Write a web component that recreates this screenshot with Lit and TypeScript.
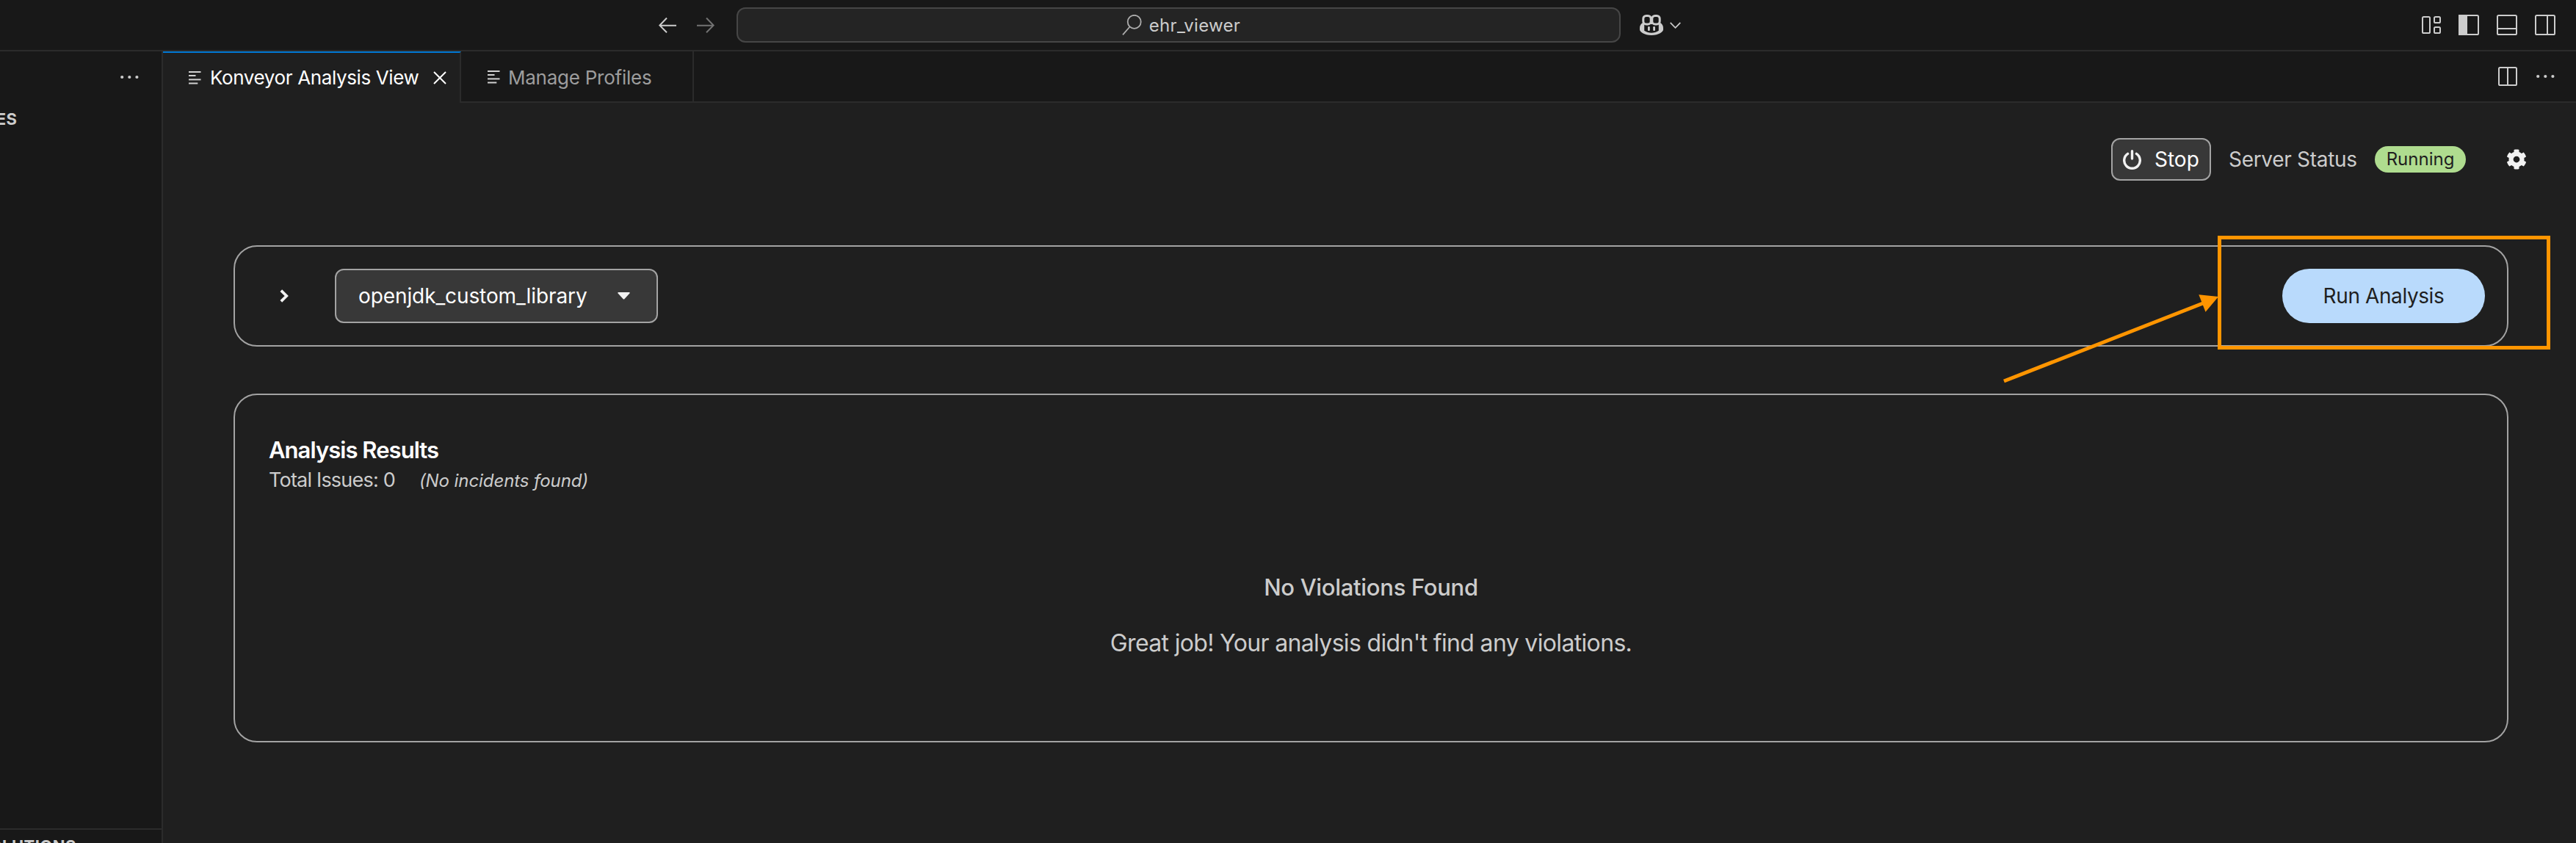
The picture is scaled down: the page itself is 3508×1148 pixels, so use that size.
import { LitElement, html, css, svg } from "lit";
import { customElement } from "lit/decorators.js";

const tabIcon = html`<svg width="17" height="18" viewBox="0 0 17 18" fill="#d0d0d0">
  <rect x="0" y="0" width="16.5" height="2"></rect>
  <rect x="0" y="5" width="9.5" height="2"></rect>
  <rect x="0" y="10.4" width="16.5" height="2"></rect>
  <rect x="0" y="15.5" width="12.3" height="2"></rect>
</svg>`;

const dots = html`<svg width="25" height="6" viewBox="0 0 25 6" fill="#cccccc">
  <circle cx="2.2" cy="3" r="2.1"></circle><circle cx="12.3" cy="3" r="2.1"></circle><circle cx="22.4" cy="3" r="2.1"></circle>
</svg>`;

const frame = (size: number, inner: unknown) => html`<svg width=${size} height=${size} viewBox="0 0 ${size} ${size}" fill="none" stroke="#cccccc" stroke-width="2">
  <rect x="1" y="1" width=${size - 2} height=${size - 2} rx="1.6"></rect>${inner}
</svg>`;

@customElement("title-bar")
class TitleBar extends LitElement {
  static styles = css`
    :host { display: flex; align-items: center; height: 68px; border-bottom: 2px solid #2b2b2b; padding: 0 28px 0 897px; box-sizing: content-box; }
    svg { display: block; flex: none; }
    .nav { display: flex; gap: 28px; margin-right: 30px; }
    .search { box-sizing: border-box; width: 1204px; height: 48px; border: 2px solid #464646; border-radius: 12px; background: #242424;
      display: flex; align-items: center; justify-content: center; gap: 10px; padding-left: 7px; color: #cccccc; letter-spacing: 0.3px; }
    .copilot { display: flex; align-items: center; gap: 9px; margin-left: 26px; }
    .layout { display: flex; align-items: center; gap: 24px; margin-left: auto; }
  `;
  render() {
    return html`
      <div class="nav">
        <svg width="24" height="22" viewBox="0 0 24 22" fill="none" stroke="#cccccc" stroke-width="2"><path d="M24 11.8H1.5M11 1.5L1.3 11.5L11 21.2"></path></svg>
        <svg width="24" height="22" viewBox="0 0 24 22" fill="none" stroke="#737373" stroke-width="2"><path d="M0 11.8H22.5M13 1.5L22.7 11.5L13 21.2"></path></svg>
      </div>
      <div class="search">
        <svg width="27" height="28" viewBox="0 0 27 28" fill="none" stroke="#adadad" stroke-width="1.8"><circle cx="16.7" cy="9.8" r="9"></circle><path d="M10.5 16.5L1 27.3"></path></svg>
        <span>ehr_viewer</span>
      </div>
      <div class="copilot">
        <svg width="32" height="28" viewBox="0 0 32 28" fill="#cccccc">
          <path fill-rule="evenodd" d="M4 11C1.5 12.5 0 15 0 18V20.5C0 23 6 28 16 28S32 23 32 20.5V18C32 15 30.5 12.5 28 11ZM6.2 13H25.8V21.8C20 25.6 12 25.6 6.2 21.8Z"></path>
          <rect x="4.8" y="1.5" width="10.4" height="11.4" rx="4" fill="#181818" stroke="#cccccc" stroke-width="3"></rect>
          <rect x="16.8" y="1.5" width="10.4" height="11.4" rx="4" fill="#181818" stroke="#cccccc" stroke-width="3"></rect>
          <rect x="11" y="16" width="2.8" height="6" rx="1.3"></rect><rect x="18.2" y="16" width="2.8" height="6" rx="1.3"></rect>
        </svg>
        <svg width="15" height="9" viewBox="0 0 15 9" fill="none" stroke="#cccccc" stroke-width="1.7"><path d="M0.7 0.9L7.5 7.8L14.3 0.9"></path></svg>
      </div>
      <div class="layout">
        <svg width="26" height="24" viewBox="0 0 26 24" fill="none" stroke="#cccccc" stroke-width="2"><rect x="1" y="1" width="10" height="22" rx="1.6"></rect><rect x="17" y="1" width="8" height="8" rx="1.6"></rect><rect x="17" y="15" width="8" height="8" rx="1.6"></rect></svg>
        ${frame(28, svg`<rect x="1" y="1" width="10" height="26" fill="#cccccc"></rect>`)}
        ${frame(28, svg`<path d="M1 19H27"></path>`)}
        ${frame(28, svg`<path d="M17 1V27"></path>`)}
      </div>`;
  }
}

@customElement("side-panel")
class SidePanel extends LitElement {
  static styles = css`
    :host { display: flex; flex-direction: column; box-sizing: border-box; width: 222px; border-right: 2px solid #2b2b2b; overflow: hidden; color: #cccccc; font-weight: 700; font-size: 22px; }
    .head { display: flex; justify-content: flex-end; align-items: center; height: 70px; padding-right: 31px; flex: none; }
    .label { display: flex; justify-content: flex-end; line-height: 44px; white-space: nowrap; letter-spacing: 0.5px; }
    .first { width: 23.5px; }
    .grow { flex: 1; }
    .section { height: 18px; border-top: 2px solid #2b2b2b; overflow: hidden; }
    .second { width: 104px; }
  `;
  render() {
    return html`
      <div class="head">${dots}</div>
      <div class="label first">ES</div>
      <div class="grow"></div>
      <div class="section"><div class="label second">OLUTIONS</div></div>`;
  }
}

@customElement("editor-tabs")
class EditorTabs extends LitElement {
  static styles = css`
    :host { display: flex; height: 70px; font-size: 26px; background: #181818; }
    svg { display: block; flex: none; }
    .tab { box-sizing: border-box; display: flex; align-items: center; border-right: 2px solid #2b2b2b; white-space: nowrap; }
    .active { width: 406px; background: #1f1f1f; border-top: 2px solid #0078d4; padding-left: 35px; padding-bottom: 1px; color: #ffffff; letter-spacing: -0.38px; }
    .active .name { margin: 0 21px 0 12px; width: 283px; }
    .idle { width: 317px; border-bottom: 2px solid #2b2b2b; padding: 2px 0 0 36px; color: #9d9d9d; letter-spacing: -0.25px; }
    .idle .name { margin-left: 11px; }
    .rest { flex: 1; display: flex; align-items: center; justify-content: flex-end; gap: 26px; border-bottom: 2px solid #2b2b2b; padding-right: 29px; }
  `;
  render() {
    return html`
      <div class="tab active">${tabIcon}<span class="name">Konveyor Analysis View</span>
        <svg width="18" height="18" viewBox="0 0 18 18" fill="none" stroke="#ffffff" stroke-width="2"><path d="M1 1L17 17M17 1L1 17"></path></svg>
      </div>
      <div class="tab idle">${tabIcon}<span class="name">Manage Profiles</span></div>
      <div class="rest">${frame(26, svg`<path d="M13 1V25"></path>`)}${dots}</div>`;
  }
}

@customElement("analysis-view")
class AnalysisView extends LitElement {
  static styles = css`
    :host { display: flex; flex-direction: column; padding: 48px 92px 0 96px; color: #cccccc; font-size: 28px; }
    svg { display: block; flex: none; }
    .status { display: flex; justify-content: flex-end; align-items: center; height: 58px; margin-right: -25px; margin-bottom: 88px; white-space: nowrap; }
    .stop { box-sizing: border-box; display: flex; align-items: center; gap: 18px; width: 136px; height: 58px; padding-left: 14px; border: 2px solid #a3a3a3; border-radius: 12px; background: #383838; color: #ffffff; }
    .server { width: 175px; margin: 0 24px 0 24px; letter-spacing: -0.3px; }
    .badge { width: 124px; height: 36px; border-radius: 18px; background: #afdc8f; color: #1f1f1f; font-size: 24px; line-height: 36px; text-align: center; margin-right: 55px; }
    .card { box-sizing: border-box; border: 2px solid #a3a3a3; border-radius: 32px; }
    .controls { display: flex; align-items: center; height: 138px; margin-bottom: 64px; padding: 0 30px 0 61px; }
    .select { box-sizing: border-box; display: flex; align-items: center; justify-content: space-between; width: 440px; height: 74px; margin-left: 63px; padding: 0 36px 0 30px; border: 2px solid #a3a3a3; border-radius: 12px; background: #383838; color: #ffffff; letter-spacing: -0.1px; }
    .run { width: 276px; height: 74px; border-radius: 37px; margin-left: auto; background: #b9dafc; color: #1f1f1f; line-height: 74px; text-align: center; letter-spacing: -0.4px; }
    .results { height: 475px; padding: 55px 46px 0; }
    .title { font-size: 31px; line-height: 40px; font-weight: 600; color: #ffffff; letter-spacing: -0.95px; }
    .totals { display: flex; align-items: baseline; line-height: 42px; gap: 33px; }
    .count { font-size: 27px; letter-spacing: -0.8px; }
    .note { font-size: 24px; font-style: italic; letter-spacing: -0.08px; }
    .empty { display: flex; flex-direction: column; align-items: center; gap: 28px; margin-top: 100px; line-height: 48px; }
    .none { font-size: 31px; font-weight: 500; letter-spacing: -0.3px; }
    .praise { font-size: 32px; letter-spacing: -0.66px; }
  `;
  render() {
    return html`
      <div class="status">
        <div class="stop">
          <svg width="25" height="27" viewBox="0 0 25 27" fill="none" stroke="#f2f2f2" stroke-width="3.4" stroke-linecap="round"><path d="M12.5 1.8V12M6.6 5.4A10.8 10.8 0 1 0 18.4 5.4"></path></svg>
          <span>Stop</span>
        </div>
        <span class="server">Server Status</span>
        <span class="badge">Running</span>
        <svg width="28" height="28" viewBox="0 0 512 512" fill="#f2f2f2"><path d="M487.4 315.7l-42.6-24.6c4.3-23.2 4.3-47 0-70.2l42.6-24.6c4.9-2.8 7.1-8.6 5.5-14-11.1-35.6-30-67.8-54.7-94.6-3.8-4.1-10-5.1-14.8-2.3L380.8 110c-17.9-15.4-38.5-27.3-60.8-35.1V25.8c0-5.6-3.9-10.5-9.4-11.7-36.7-8.2-74.3-7.8-109.2 0-5.5 1.2-9.4 6.1-9.4 11.7V75c-22.2 7.9-42.8 19.8-60.8 35.1L88.7 85.5c-4.9-2.8-11-1.9-14.8 2.3-24.7 26.7-43.6 58.9-54.7 94.6-1.7 5.4.6 11.2 5.5 14L67.3 221c-4.3 23.2-4.3 47 0 70.2l-42.6 24.6c-4.9 2.8-7.1 8.6-5.5 14 11.1 35.6 30 67.8 54.7 94.6 3.8 4.1 10 5.1 14.8 2.3l42.6-24.6c17.9 15.4 38.5 27.3 60.8 35.1v49.2c0 5.6 3.9 10.5 9.4 11.7 36.7 8.2 74.3 7.8 109.2 0 5.5-1.2 9.4-6.1 9.4-11.7v-49.2c22.2-7.9 42.8-19.8 60.8-35.1l42.6 24.6c4.9 2.8 11 1.9 14.8-2.3 24.7-26.7 43.6-58.9 54.7-94.6 1.5-5.5-.7-11.3-5.6-14.1zM256 336c-44.1 0-80-35.9-80-80s35.9-80 80-80 80 35.9 80 80-35.9 80-80 80z"></path></svg>
      </div>
      <div class="card controls">
        <svg width="12" height="18" viewBox="0 0 12 18" fill="none" stroke="#f2f2f2" stroke-width="3.8"><path d="M1.8 1.6L9.2 9L1.8 16.4"></path></svg>
        <div class="select"><span>openjdk_custom_library</span>
          <svg width="17" height="10" viewBox="0 0 17 10" fill="#f2f2f2"><path d="M1.2 0H15.8C16.8 0 17 0.9 16.4 1.6L9.3 9.2Q8.5 9.9 7.7 9.2L0.6 1.6C0 0.9 0.2 0 1.2 0Z"></path></svg>
        </div>
        <div class="run">Run Analysis</div>
      </div>
      <div class="card results">
        <div class="title">Analysis Results</div>
        <div class="totals"><span class="count">Total Issues: 0</span><span class="note">(No incidents found)</span></div>
        <div class="empty"><div class="none">No Violations Found</div><div class="praise">Great job! Your analysis didn't find any violations.</div></div>
      </div>`;
  }
}

@customElement("app-root")
class AppRoot extends LitElement {
  static styles = css`
    :host { display: flex; flex-direction: column; position: relative; width: 3508px; height: 1148px; overflow: hidden; background: #181818; font: 400 24px Inter, "Liberation Sans", sans-serif; }
    .body { display: flex; flex: 1; min-height: 0; }
    .editor { flex: 1; min-width: 0; background: #1f1f1f; }
    .callout { position: absolute; left: 0; top: 0; pointer-events: none; }
  `;
  render() {
    return html`
      <title-bar></title-bar>
      <div class="body">
        <side-panel></side-panel>
        <div class="editor"><editor-tabs></editor-tabs><analysis-view></analysis-view></div>
      </div>
      <svg class="callout" width="3508" height="1148" viewBox="0 0 3508 1148" fill="none" stroke="#ff9500" stroke-width="5">
        <rect x="3022.5" y="323.5" width="448" height="150"></rect>
        <path d="M2729 519L3000 413"></path>
        <path d="M2994.3 401.3L3021 404L3003.5 424.7Z" fill="#ff9500" stroke="none"></path>
      </svg>`;
  }
}
